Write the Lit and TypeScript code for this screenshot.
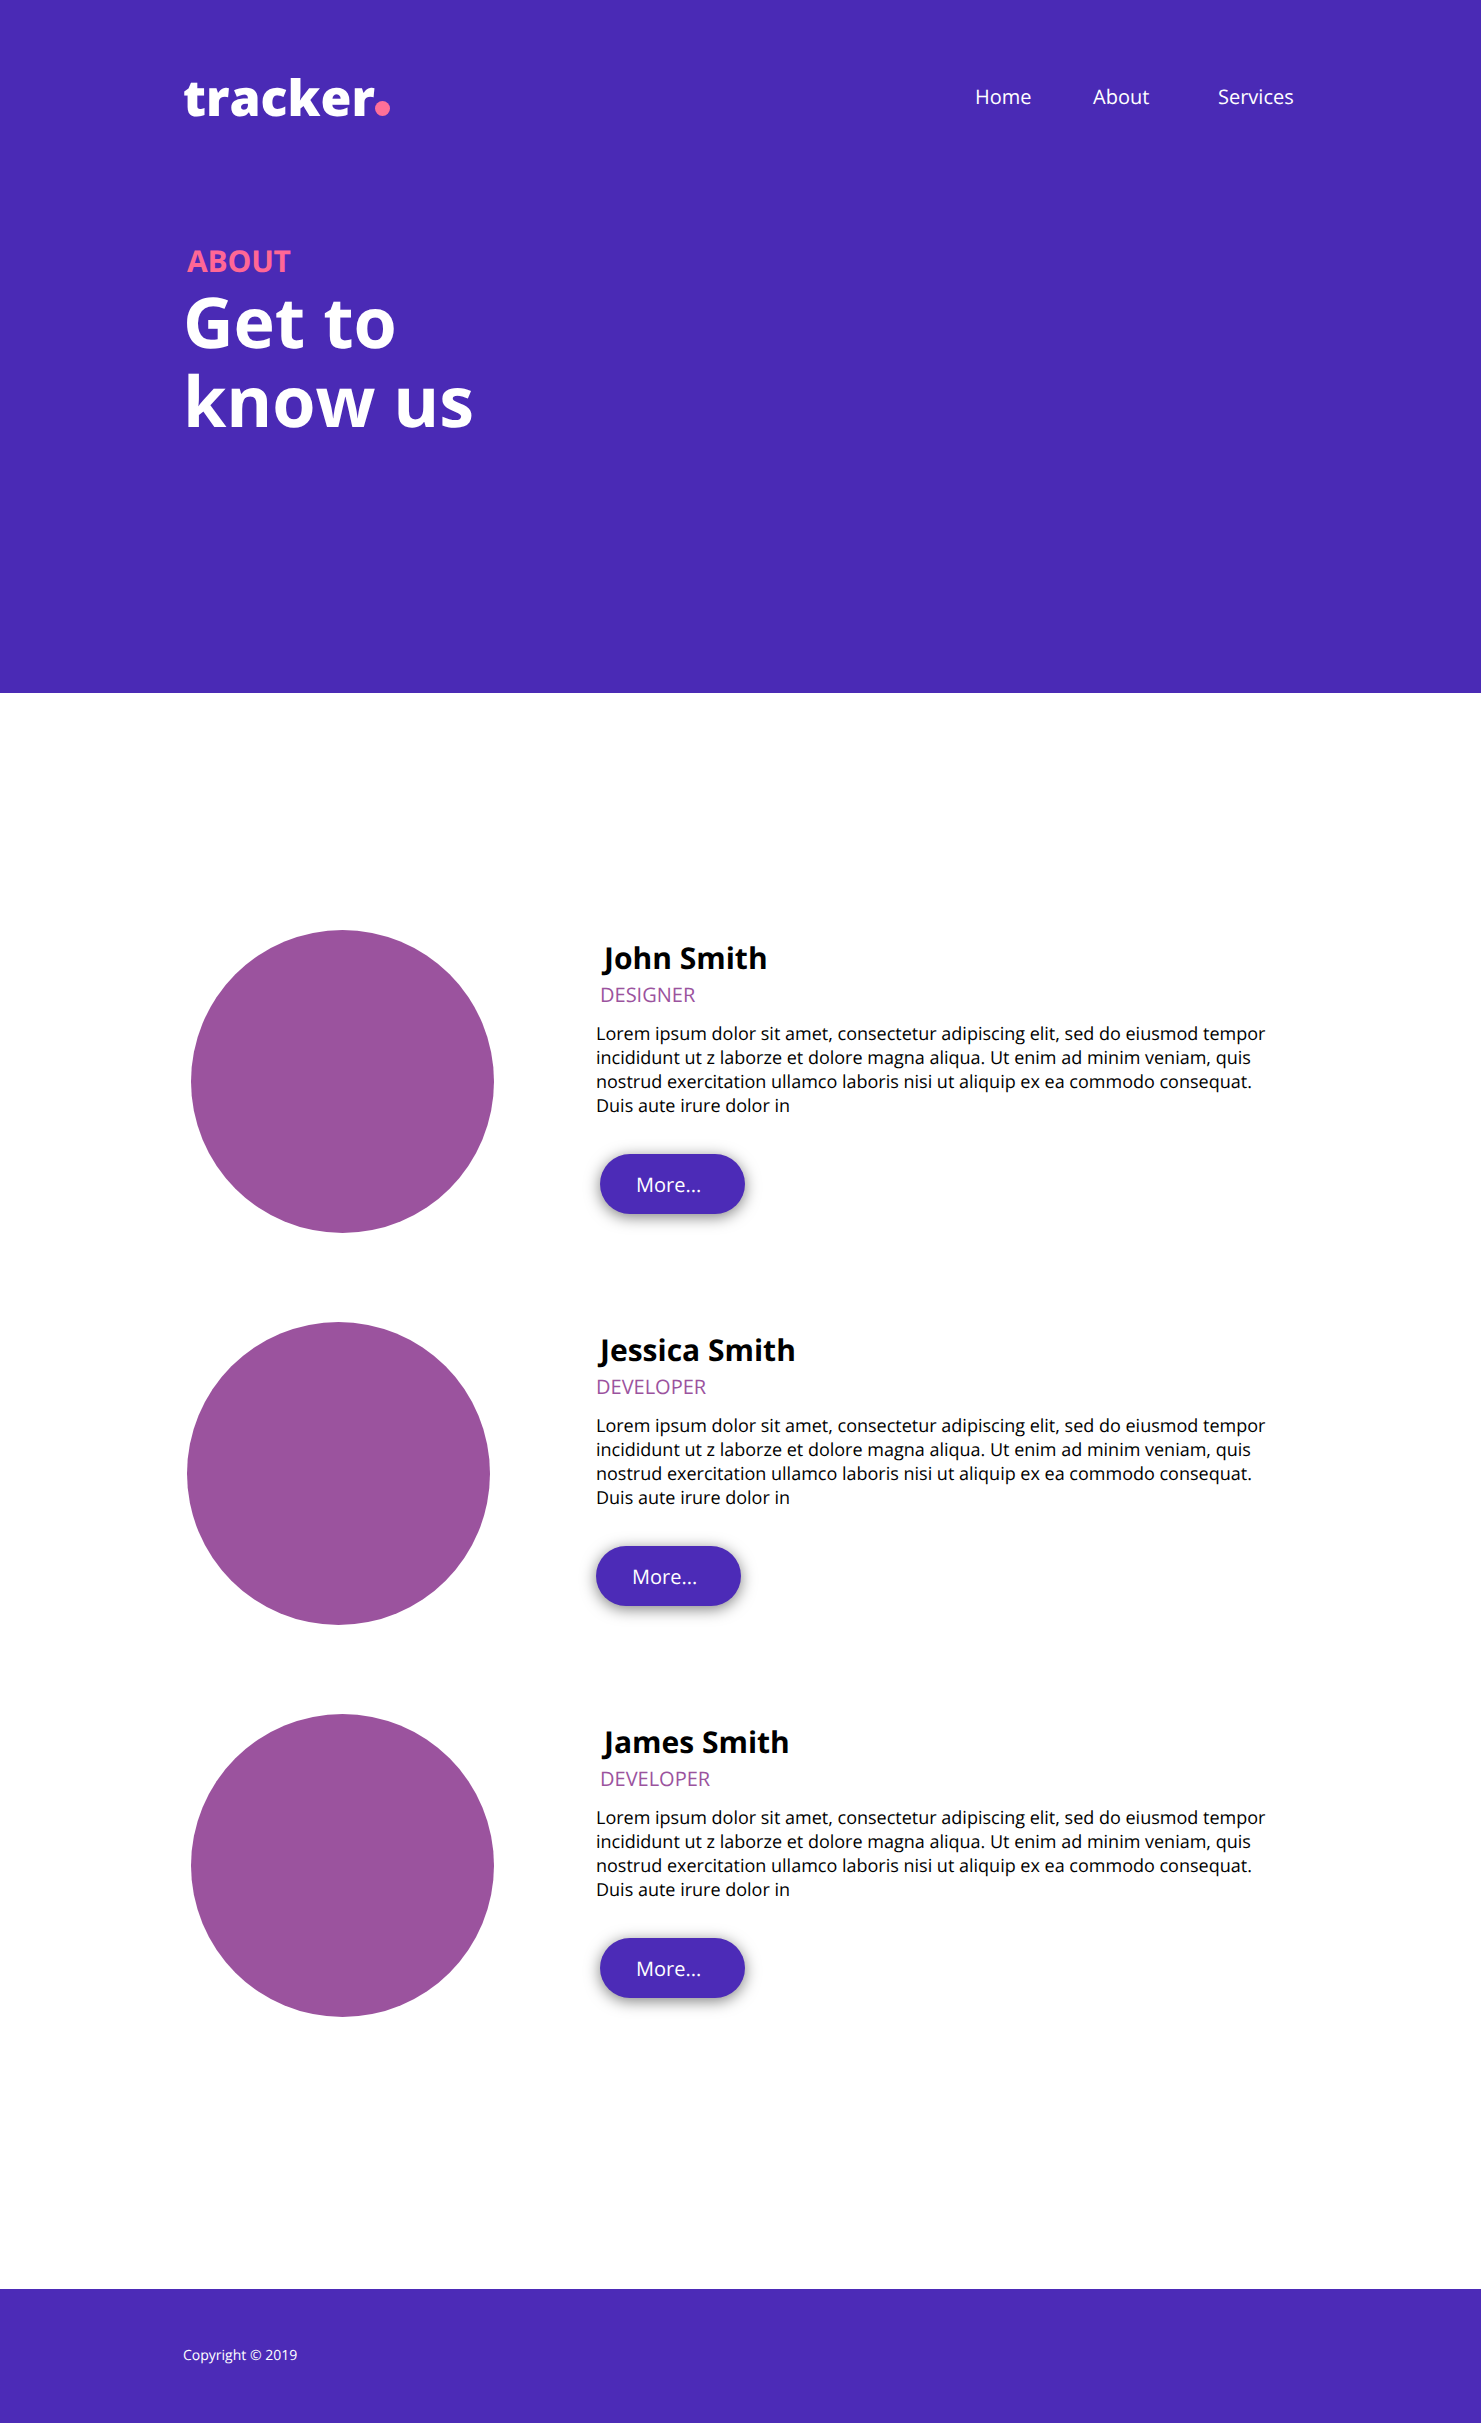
import { LitElement, html, css } from "lit";
import { customElement, property } from "lit/decorators.js";
import { classMap } from "lit/directives/class-map.js";

interface Member {
  name: string;
  role: string;
  bio: string[];
  shifted: boolean;
}

const BIO = [
  "Lorem ipsum dolor sit amet, consectetur adipiscing elit, sed do eiusmod tempor",
  "incididunt ut z laborze et dolore magna aliqua. Ut enim ad minim veniam, quis",
  "nostrud exercitation ullamco laboris nisi ut aliquip ex ea commodo consequat.",
  "Duis aute irure dolor in",
];

const TEAM: Member[] = [
  { name: "John Smith", role: "DESIGNER", bio: BIO, shifted: true },
  { name: "Jessica Smith", role: "DEVELOPER", bio: BIO, shifted: false },
  { name: "James Smith", role: "DEVELOPER", bio: BIO, shifted: true },
];

@customElement("team-member")
export class TeamMember extends LitElement {
  @property({ attribute: false }) member!: Member;

  static styles = css`
    :host {
      display: block;
    }
    .row {
      display: grid;
      grid-template-columns: 408px 1fr;
      height: 303px;
    }
    .avatar {
      width: 303px;
      height: 303px;
      border-radius: 50%;
      background: #9b539e;
    }
    .info {
      padding-top: 7px;
    }
    .name {
      margin: 0 0 3px 5px;
      font-size: 30px;
      line-height: 41px;
      font-weight: 700;
    }
    .shifted .name {
      margin-left: 9px;
    }
    .role {
      margin: 0 0 14px 1px;
      font-size: 20px;
      line-height: 27px;
      color: #9b539e;
    }
    .shifted .role {
      margin-left: 5px;
    }
    .bio {
      margin: 0 0 36px 1px;
      font-size: 18px;
      line-height: 24px;
      white-space: nowrap;
    }
    .shifted .avatar {
      margin-left: 4px;
    }
    .more {
      display: block;
      box-sizing: border-box;
      width: 145px;
      height: 60px;
      margin-left: 1px;
      padding: 1px 0 0 36px;
      border: 0;
      border-radius: 30px;
      background: #4c2bb7;
      box-shadow: 0 3px 15px rgba(0, 0, 0, 0.5);
      color: #fff;
      font: 400 20px/60px "Open Sans", sans-serif;
      text-align: left;
      text-rendering: geometricPrecision;
    }
    .shifted .more {
      margin-left: 5px;
    }
  `;

  render() {
    const { name, role, bio, shifted } = this.member;
    return html`
      <article class=${classMap({ row: true, shifted })}>
        <div class="avatar"></div>
        <div class="info">
          <h2 class="name">${name}</h2>
          <p class="role">${role}</p>
          <p class="bio">${bio.map((line, i) => (i ? html`<br />${line}` : line))}</p>
          <button class="more">More...</button>
        </div>
      </article>
    `;
  }
}

@customElement("app-root")
export class AppRoot extends LitElement {
  static styles = css`
    :host {
      display: flex;
      flex-direction: column;
      height: 2423px;
      background: #fff;
      color: #000;
      font-family: "Open Sans", sans-serif;
      text-rendering: geometricPrecision;
    }
    .hero {
      box-sizing: border-box;
      height: 693px;
      padding: 63px 187px 0 183px;
      background: #4a2ab5;
      color: #fff;
    }
    .bar {
      display: flex;
      justify-content: space-between;
      height: 68px;
    }
    .logo {
      display: flex;
      font-size: 50px;
      line-height: 68px;
      font-weight: 800;
    }
    .dot {
      width: 15px;
      height: 15px;
      margin-top: 38px;
      border-radius: 50%;
      background: #ff6f98;
    }
    .nav {
      display: grid;
      grid-template-columns: 118px 125px 76px;
      padding-top: 20px;
      font-size: 20px;
      line-height: 27px;
      width: 319px;
    }
    .link {
      color: inherit;
      text-decoration: none;
    }
    .eyebrow {
      margin: 109px 0 1px 4px;
      font-size: 30px;
      line-height: 41px;
      font-weight: 700;
      letter-spacing: -0.2px;
      color: #ff6795;
    }
    .title {
      margin: 0;
      font-size: 70px;
      line-height: 79px;
      font-weight: 700;
      letter-spacing: -0.1px;
    }
    .team {
      display: flex;
      flex-direction: column;
      gap: 89px;
      flex: 1;
      padding: 237px 187px 0;
    }
    .footer {
      box-sizing: border-box;
      height: 134px;
      padding: 57px 183px 0;
      background: #4c2bb7;
      color: #fff;
      font-size: 14px;
      line-height: 19px;
    }
  `;

  render() {
    return html`
      <header class="hero">
        <div class="bar">
          <div class="logo">tracker<span class="dot"></span></div>
          <nav class="nav">
            <a class="link">Home</a>
            <a class="link">About</a>
            <a class="link">Services</a>
          </nav>
        </div>
        <p class="eyebrow">ABOUT</p>
        <h1 class="title">Get to<br />know us</h1>
      </header>
      <main class="team">
        ${TEAM.map((m) => html`<team-member .member=${m}></team-member>`)}
      </main>
      <footer class="footer">Copyright © 2019</footer>
    `;
  }
}
